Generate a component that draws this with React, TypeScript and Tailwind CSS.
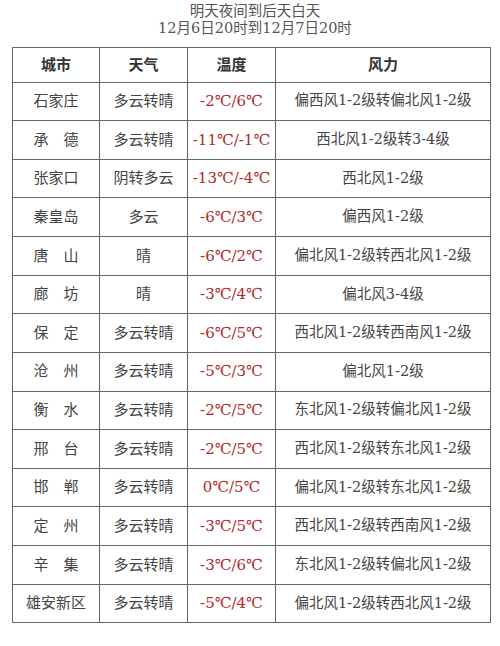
import React from "react";

const rows: [string, string, string, string][] = [
  ["石家庄", "多云转晴", "-2℃/6℃", "偏西风1-2级转偏北风1-2级"],
  ["承德", "多云转晴", "-11℃/-1℃", "西北风1-2级转3-4级"],
  ["张家口", "阴转多云", "-13℃/-4℃", "西北风1-2级"],
  ["秦皇岛", "多云", "-6℃/3℃", "偏西风1-2级"],
  ["唐山", "晴", "-6℃/2℃", "偏北风1-2级转西北风1-2级"],
  ["廊坊", "晴", "-3℃/4℃", "偏北风3-4级"],
  ["保定", "多云转晴", "-6℃/5℃", "西北风1-2级转西南风1-2级"],
  ["沧州", "多云转晴", "-5℃/3℃", "偏北风1-2级"],
  ["衡水", "多云转晴", "-2℃/5℃", "东北风1-2级转偏北风1-2级"],
  ["邢台", "多云转晴", "-2℃/5℃", "西北风1-2级转东北风1-2级"],
  ["邯郸", "多云转晴", "0℃/5℃", "偏北风1-2级转东北风1-2级"],
  ["定州", "多云转晴", "-3℃/5℃", "西北风1-2级转西南风1-2级"],
  ["辛集", "多云转晴", "-3℃/6℃", "东北风1-2级转偏北风1-2级"],
  ["雄安新区", "多云转晴", "-5℃/4℃", "偏北风1-2级转西北风1-2级"],
];

function City({ name }: { name: string }) {
  if (name.length === 2) {
    return (
      <span className="inline-flex w-[45px] justify-between">
        <span>{name[0]}</span>
        <span>{name[1]}</span>
      </span>
    );
  }
  return <span>{name}</span>;
}

export default function App() {
  return (
    <div
      className="w-[500px] h-[646px] bg-white text-[#444]"
      style={{ fontFamily: '"DejaVu Serif", "Noto Sans CJK SC", serif' }}
    >
      <div className="pt-[3px] pl-[10px] text-center text-[14.5px] leading-[17px] text-[#555]">
        <div>明天夜间到后天白天</div>
        <div>12月6日20时到12月7日20时</div>
      </div>
      <table className="ml-[12px] mt-[10px] w-[478px] table-fixed border-collapse text-[15px]">
        <colgroup>
          <col className="w-[87px]" />
          <col className="w-[88px]" />
          <col className="w-[88px]" />
          <col className="w-[215px]" />
        </colgroup>
        <thead>
          <tr className="h-[34.5px]">
            {["城市", "天气", "温度", "风力"].map((h) => (
              <th key={h} className="border border-[#666] text-center font-bold text-[#333] p-0">
                {h}
              </th>
            ))}
          </tr>
        </thead>
        <tbody>
          {rows.map((r) => (
            <tr key={r[0]} className="h-[38.64px]">
              <td className="border border-[#666] text-center p-0">
                <City name={r[0]} />
              </td>
              <td className="border border-[#666] text-center p-0">{r[1]}</td>
              <td className="border border-[#666] text-center p-0 text-[#b22a2a]">{r[2]}</td>
              <td className="border border-[#666] text-center p-0 text-[14.5px]">{r[3]}</td>
            </tr>
          ))}
        </tbody>
      </table>
    </div>
  );
}
